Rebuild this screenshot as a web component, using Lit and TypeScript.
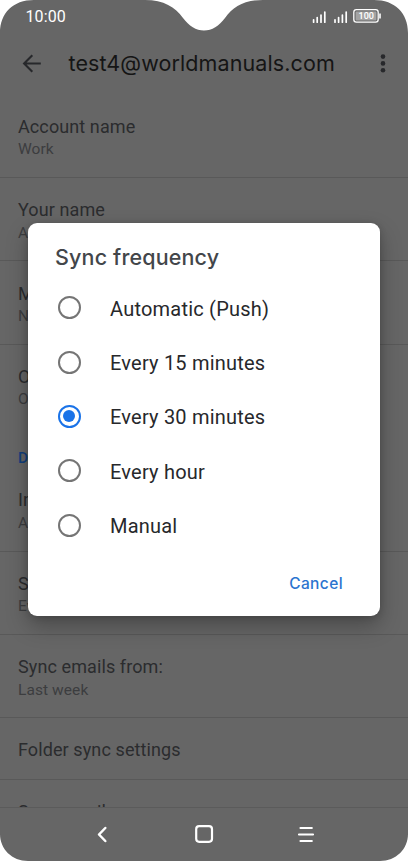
import { LitElement, html, css, svg } from "lit";
import { customElement, property, state } from "lit/decorators.js";

interface Setting {
  title: string;
  sub?: string;
  kind?: "last" | "single" | "cut";
}

@customElement("radio-option")
class RadioOption extends LitElement {
  @property() label = "";
  @property({ type: Boolean }) checked = false;
  static styles = css`
    :host { display: flex; align-items: center; height: 54.4px; padding-left: 29.5px; cursor: pointer; }
    .ring { box-sizing: border-box; width: 23px; height: 23px; border: 2px solid #757575; border-radius: 50%; display: grid; place-items: center; }
    .on { border-color: #1a73e8; }
    .dot { width: 12px; height: 12px; border-radius: 50%; background: #1a73e8; }
    .label { margin: 2px 0 0 29.5px; font: 400 20px/24px Roboto, sans-serif; color: #27282b; letter-spacing: 0.21px; white-space: nowrap; }
  `;
  render() {
    return html`<span class="ring ${this.checked ? "on" : ""}">${this.checked ? html`<span class="dot"></span>` : ""}</span>
      <span class="label">${this.label}</span>`;
  }
}

@customElement("app-root")
class AppRoot extends LitElement {
  @state() selected = "Every 30 minutes";

  options = ["Automatic (Push)", "Every 15 minutes", "Every 30 minutes", "Every hour", "Manual"];
  account: Setting[] = [
    { title: "Account name", sub: "Work" },
    { title: "Your name", sub: "A" },
    { title: "M", sub: "N" },
    { title: "O", sub: "O", kind: "last" },
  ];
  usage: Setting[] = [
    { title: "In", sub: "A" },
    { title: "S", sub: "Ev" },
    { title: "Sync emails from:", sub: "Last week" },
    { title: "Folder sync settings", kind: "single" },
    { title: "Sync email", kind: "cut" },
  ];

  static styles = css`
    :host { display: block; width: 408px; height: 861px; background: #fff; overflow: hidden; font-family: Roboto, sans-serif; }
    .phone {
      position: relative; display: flex; flex-direction: column; width: 408px; height: 861px; background: #666;
      clip-path: path("M0 33 C0 13 13 0 34 0 H145 C164 0 175 7 183 18 C189 26 196 30.5 204 30.5 C212 30.5 219 26 225 18 C233 7 244 0 263 0 H374 C395 0 408 13 408 33 V834 C408 849 396 861 380 861 H28 C12 861 0 849 0 834 Z");
    }
    .status { display: flex; height: 33px; align-items: center; justify-content: space-between; padding: 0 25px 0 25.5px; color: #fff; box-sizing: border-box; }
    .time { font-size: 16px; line-height: 20px; letter-spacing: 0.1px; }
    .status svg { display: block; }
    .bar { display: flex; align-items: center; height: 61px; color: #27282b; }
    .back { margin-left: 22px; width: 20px; height: 20px; }
    .title { flex: 1; margin: -2px 0 0 26.5px; font: 400 21.5px/28px Inter, sans-serif; letter-spacing: 0.1px; color: #151515; white-space: nowrap; }
    .more { width: 6px; height: 20px; margin-right: 22px; }
    .list { flex: 1; min-height: 0; overflow: hidden; border-bottom: 1px solid #5b5b5b; }
    .row { box-sizing: border-box; height: 83.4px; padding: 21.2px 18px 0; border-bottom: 1px solid #595959; color: #2b2c2e; }
    .row.last { border: 0; }
    .row.single { height: 62px; padding-top: 20.8px; }
    .row.cut { height: 62px; border: 0; padding-top: 20.5px; }
    .name { font-size: 18px; line-height: 22px; letter-spacing: 0.1px; white-space: nowrap; }
    .sub { font-size: 15.5px; line-height: 18px; margin-top: 2.4px; letter-spacing: 0.08px; color: #3c3d3f; white-space: nowrap; }
    .head { height: 40px; padding: 21px 18px 0; box-sizing: border-box; font: 500 15.5px/18px Roboto, sans-serif; color: #123f7c; }
    .account { padding-top: 0.6px; }
    .nav { display: block; height: 53px; }
    .dialog {
      position: absolute; left: 28px; top: 222.5px; width: 351.5px; height: 393px; box-sizing: border-box; padding-top: 19px;
      background: #fff; border-radius: 9px; box-shadow: 0 10px 22px rgba(0,0,0,.28), 0 1px 7px rgba(0,0,0,.16);
    }
    .dtitle { padding-left: 27px; font: 500 21.5px/30px Inter, sans-serif; letter-spacing: 0.15px; color: #43464a; }
    .options { padding-top: 9px; }
    .actions { display: flex; justify-content: flex-end; padding: 21px 36.5px 0 0; }
    .cancel { border: 0; background: none; padding: 0; font: 500 15.5px/22px Inter, sans-serif; letter-spacing: 0.4px; color: #2b74cf; }
  `;

  row(s: Setting) {
    return html`<div class="row ${s.kind ?? ""}"><div class="name">${s.title}</div>${s.sub ? html`<div class="sub">${s.sub}</div>` : ""}</div>`;
  }

  signal(x: number) {
    return svg`<path d="M${x} 15.8v2.4M${x + 3.6} 13.6v4.6M${x + 7.4} 11v7.2M${x + 11.2} 8v10.2" stroke="#fff" stroke-width="1.7" stroke-linecap="round"/>`;
  }

  render() {
    return html`<div class="phone">
      <div class="status">
        <span class="time">10:00</span>
        <svg width="71" height="25" viewBox="0 0 71 25" fill="none">
          ${this.signal(1.6)} ${this.signal(23)}
          <rect x="41.8" y="5.6" width="24.4" height="12.6" rx="2.6" stroke="#fff" stroke-width="1.3"/>
          <rect x="43.6" y="7.4" width="20.8" height="9" rx="1" fill="#fff" fill-opacity=".4"/>
          <path d="M67.2 9.5h1.6v5h-1.6z" fill="#fff"/>
          <text x="54.2" y="15.1" fill="#fff" font-family="Roboto, sans-serif" font-size="9" font-weight="500" text-anchor="middle">100</text>
        </svg>
      </div>
      <div class="bar">
        <svg class="back" viewBox="0 0 20 20" fill="none" stroke="currentColor" stroke-width="2.1"><path d="M18.8 9.5H2.5M10.3 1.3 2.1 9.5l8.2 8.2"/></svg>
        <span class="title">test4@worldmanuals.com</span>
        <svg class="more" viewBox="0 0 6 20" fill="currentColor"><circle cx="3" cy="2.6" r="2.3"/><circle cx="3" cy="9.4" r="2.3"/><circle cx="3" cy="16.2" r="2.3"/></svg>
      </div>
      <div class="list">
        <div class="account">${this.account.map((s) => this.row(s))}</div>
        <div class="head">D</div>
        ${this.usage.map((s) => this.row(s))}
      </div>
      <svg class="nav" width="408" height="53" viewBox="0 0 408 53" fill="none" stroke="#fff" stroke-width="2.2" stroke-linecap="round" stroke-linejoin="round">
        <path d="M105.3 20l-6.3 6.5 6.3 6.5" stroke-width="2.5"/>
        <rect x="196.2" y="18.2" width="15.8" height="15.6" rx="3"/>
        <path d="M300.5 20h11.3M299 26.5h14M300.5 33h11.3"/>
      </svg>
      <div class="dialog">
        <div class="dtitle">Sync frequency</div>
        <div class="options">
          ${this.options.map((o) => html`<radio-option .label=${o} .checked=${o === this.selected} @click=${() => (this.selected = o)}></radio-option>`)}
        </div>
        <div class="actions"><button class="cancel">Cancel</button></div>
      </div>
    </div>`;
  }
}
